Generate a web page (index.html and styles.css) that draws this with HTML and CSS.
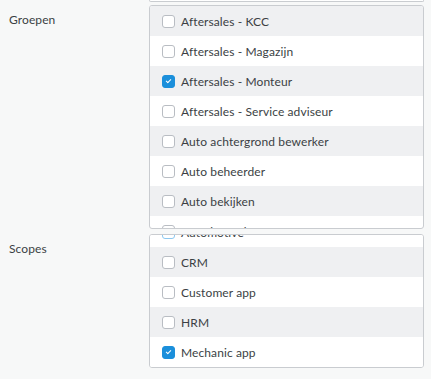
FILE: index.html
```html
<!DOCTYPE html>
<html lang="nl">
<head>
    <meta charset="UTF-8">
    <title>Gebruiker</title>
    <link rel="stylesheet" href="styles.css">
</head>
<body>
    <div class="form">
        <!-- einde van vorige lijst -->
        <div class="prev-box"></div>

        <div class="field">
            <label class="field-label">Groepen</label>
            <div class="check-list groups">
                <div class="check-inner">
                    <div class="check-row"><span class="box"></span>Aftersales - KCC</div>
                    <div class="check-row"><span class="box"></span>Aftersales - Magazijn</div>
                    <div class="check-row"><span class="box checked"></span>Aftersales - Monteur</div>
                    <div class="check-row"><span class="box"></span>Aftersales - Service adviseur</div>
                    <div class="check-row"><span class="box"></span>Auto achtergrond bewerker</div>
                    <div class="check-row"><span class="box"></span>Auto beheerder</div>
                    <div class="check-row"><span class="box"></span>Auto bekijken</div>
                    <div class="check-row"><span class="box"></span>Auto bewerken</div>
                </div>
            </div>
        </div>

        <div class="field">
            <label class="field-label">Scopes</label>
            <div class="check-list scopes">
                <div class="check-inner">
                    <div class="check-row"><span class="box focus"></span>Automotive</div>
                    <div class="check-row"><span class="box"></span>CRM</div>
                    <div class="check-row"><span class="box"></span>Customer app</div>
                    <div class="check-row"><span class="box"></span>HRM</div>
                    <div class="check-row"><span class="box checked"></span>Mechanic app</div>
                </div>
            </div>
        </div>
    </div>
</body>
</html>
```

FILE: styles.css
```css
/* Algemeen */
body {
    margin: 0;
    background: #f7f8f8;
    font-family: Lato, "Noto Sans", sans-serif;
    font-size: 12px;
    letter-spacing: 0.1px;
    color: #3b3f44;
}

.form {
    width: 424px;
}

.prev-box {
    margin-left: 149px;
    height: 1px;
    background: #fff;
    border: 1px solid #c9ccd0;
    border-top: none;
    border-radius: 0 0 3px 3px;
}

.field {
    display: grid;
    grid-template-columns: 149px 1fr;
    margin-top: 3px;
}

.field + .field {
    margin-top: 5px;
}

.field-label {
    padding: 6px 0 0 9px;
    line-height: 18px;
}

/* Lijst met vinkjes */
.check-list {
    border: 1px solid #c9ccd0;
    border-radius: 3px;
    background: #fff;
    overflow: hidden;
}

.groups {
    height: 222px;
}

.scopes {
    height: 132px;
}

.scopes .check-inner {
    margin-top: -18px;
}

.check-row {
    display: flex;
    align-items: center;
    height: 30px;
    padding-left: 12px;
}

.check-row:nth-child(odd) {
    background: #eff0f2;
}

.scopes .check-row:nth-child(odd) {
    background: #fff;
}

.scopes .check-row:nth-child(even) {
    background: #eff0f2;
}

.box {
    width: 11px;
    height: 11px;
    border: 1px solid #b9bdc3;
    border-radius: 3px;
    background: #fff;
    margin-right: 6px;
    position: relative;
}

.box.focus {
    border-color: #8cc8f0;
}

.box.checked {
    background: #1b8fdb;
    border-color: #1b8fdb;
}

.box.checked::after {
    content: "";
    position: absolute;
    left: 4px;
    top: 2px;
    width: 2px;
    height: 4px;
    border: solid #fff;
    border-width: 0 1.5px 1.5px 0;
    transform: rotate(45deg);
}
```
